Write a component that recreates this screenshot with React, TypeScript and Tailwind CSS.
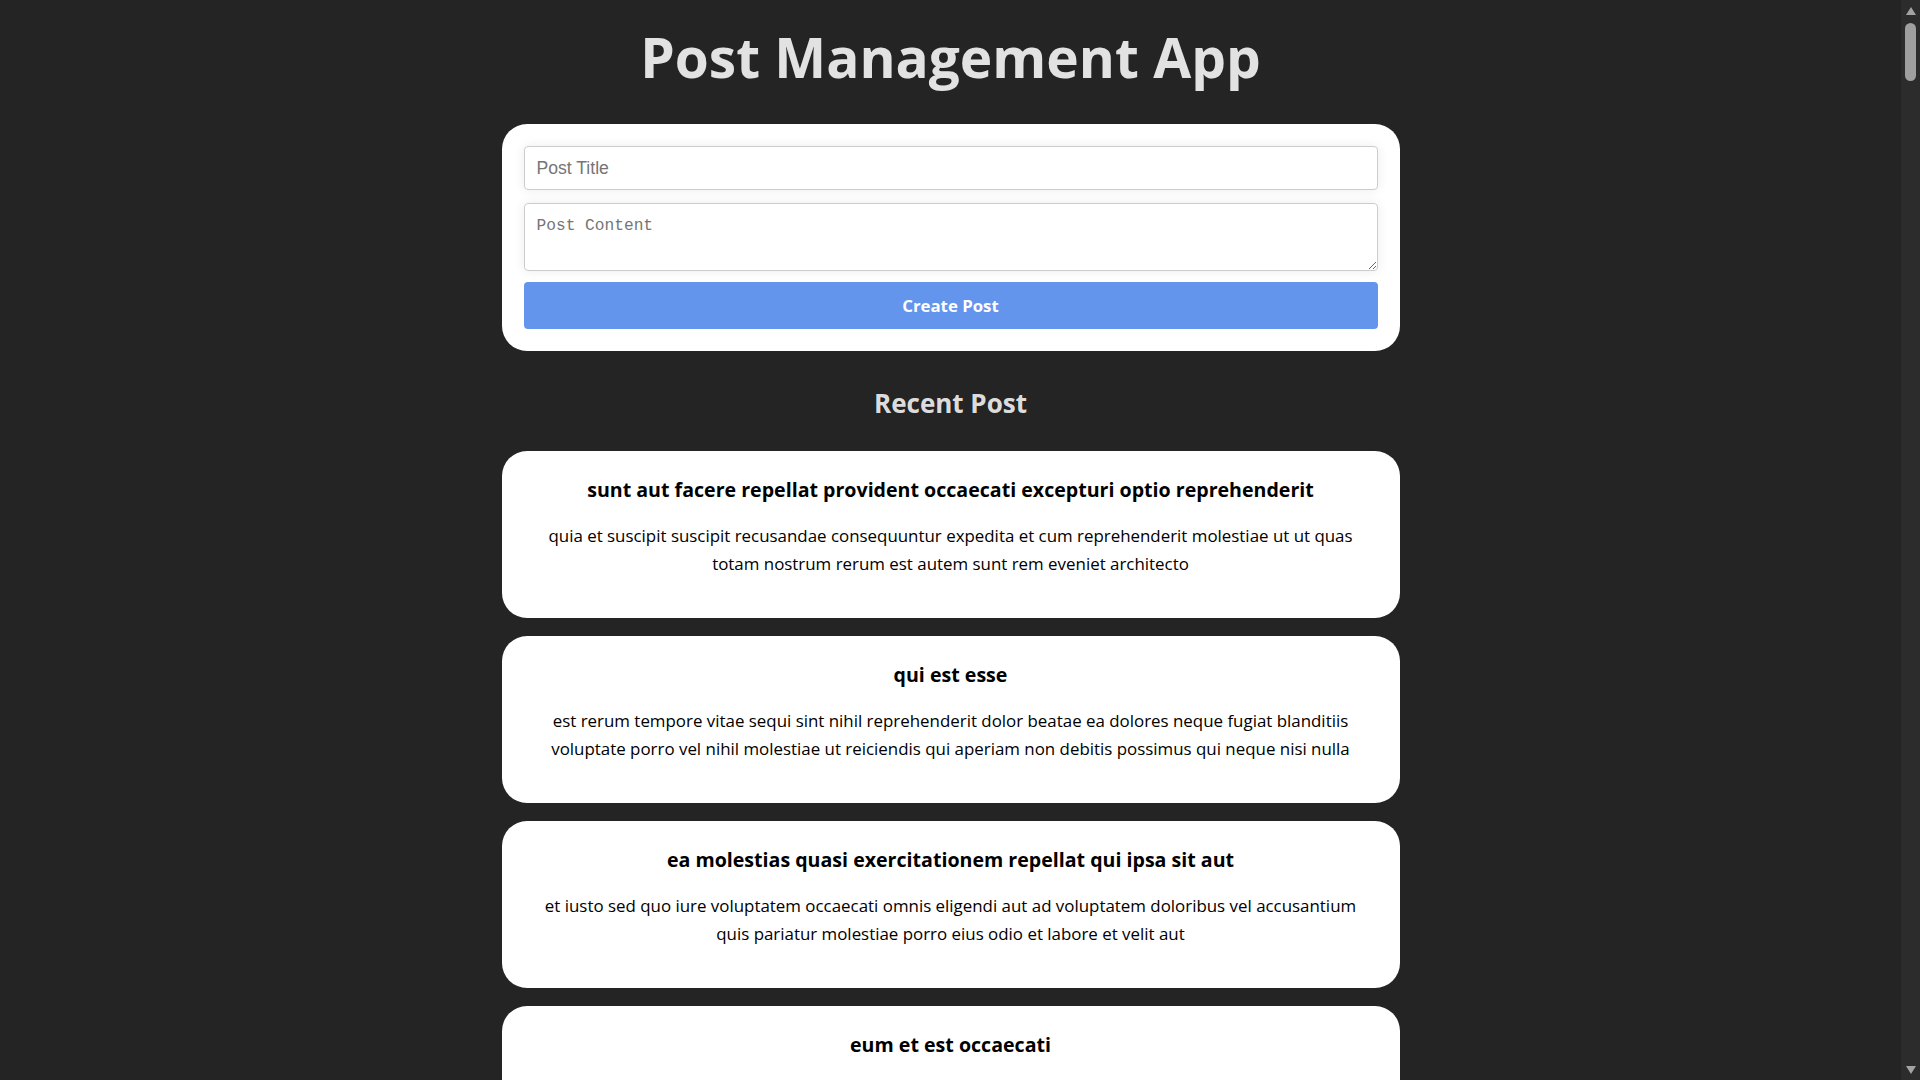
import React, { useState } from 'react';

interface Post {
  id: number;
  title: string;
  body: string;
}

const initialPosts: Post[] = [
  {
    id: 1,
    title: 'sunt aut facere repellat provident occaecati excepturi optio reprehenderit',
    body: 'quia et suscipit suscipit recusandae consequuntur expedita et cum reprehenderit molestiae ut ut quas totam nostrum rerum est autem sunt rem eveniet architecto'
  },
  {
    id: 2,
    title: 'qui est esse',
    body: 'est rerum tempore vitae sequi sint nihil reprehenderit dolor beatae ea dolores neque fugiat blanditiis voluptate porro vel nihil molestiae ut reiciendis qui aperiam non debitis possimus qui neque nisi nulla'
  },
  {
    id: 3,
    title: 'ea molestias quasi exercitationem repellat qui ipsa sit aut',
    body: 'et iusto sed quo iure voluptatem occaecati omnis eligendi aut ad voluptatem doloribus vel accusantium quis pariatur molestiae porro eius odio et labore et velit aut'
  },
  {
    id: 4,
    title: 'eum et est occaecati',
    body: 'ullam et saepe reiciendis voluptatem adipisci sit amet autem assumenda provident rerum culpa quis hic commodi nesciunt rem tenetur doloremque ipsam iure quis sunt voluptatem rerum illo velit'
  },
  {
    id: 5,
    title: 'nesciunt quas odio',
    body: 'repudiandae veniam quaerat sunt sed alias aut fugiat sit autem sed est voluptatem omnis possimus esse voluptatibus quis est aut tenetur dolor neque'
  }
];

function ScrollBar() {
  return (
    <div className="w-[19px] shrink-0 bg-[#2c2c2c] flex flex-col items-center">
      <svg width="12" height="10" viewBox="0 0 12 10" className="mt-[6px]">
        <path d="M6 1 L11 9 L1 9 Z" fill="#a3a3a3" />
      </svg>
      <div className="mt-[7px] w-[11px] h-[58px] rounded-full bg-[#9f9f9f]" />
      <div className="flex-1" />
      <svg width="12" height="10" viewBox="0 0 12 10" className="mb-[5px]">
        <path d="M1 1 L11 1 L6 9 Z" fill="#a3a3a3" />
      </svg>
    </div>
  );
}

export default function App() {
  const [posts, setPosts] = useState<Post[]>(initialPosts);
  const [title, setTitle] = useState('');
  const [body, setBody] = useState('');

  const handleSubmit = (e: React.FormEvent) => {
    e.preventDefault();
    if (!title.trim() || !body.trim()) return;
    setPosts([{ id: Date.now(), title, body }, ...posts]);
    setTitle('');
    setBody('');
  };

  return (
    <div className="h-screen flex bg-[#242424] font-['Open_Sans',sans-serif] overflow-hidden">
      <main className="flex-1 min-w-0 overflow-hidden">
        <div className="w-[898px] mx-auto pt-[29px] pb-10">

          {/* Header */}
          <h1 className="text-center text-[55px] leading-none font-bold text-white/87 mb-[40px]">
            Post Management App
          </h1>

          {/* Create form */}
          <form
            onSubmit={handleSubmit}
            className="bg-white rounded-[25px] p-[22px] flex flex-col"
          >
            <input
              type="text"
              value={title}
              onChange={(e) => setTitle(e.target.value)}
              placeholder="Post Title"
              className="h-[44px] px-3 mb-[13px] border border-[#ccc] rounded-[4px] shadow-[0_0_12px_rgba(0,0,0,0.08)] font-['Liberation_Sans',Arial,sans-serif] text-[17.6px] text-black placeholder:text-[#757575] outline-none"
            />
            <textarea
              value={body}
              onChange={(e) => setBody(e.target.value)}
              placeholder="Post Content"
              className="h-[68px] px-3 py-[10px] mb-[11px] border border-[#ccc] rounded-[4px] shadow-[0_0_12px_rgba(0,0,0,0.08)] font-['Liberation_Mono',monospace] text-[16.2px] text-black placeholder:text-[#757575] outline-none block"
            />
            <button
              type="submit"
              className="h-[47px] rounded-[4px] bg-[#6495ed] text-white text-[16.8px] font-bold"
            >
              Create Post
            </button>
          </form>

          {/* List */}
          <h2 className="text-center text-[26px] leading-none font-bold text-white/87 mt-[39px] mb-[35px]">
            Recent Post
          </h2>

          <div className="flex flex-col gap-[18px]">
            {posts.map((post) => (
              <div
                key={post.id}
                className="bg-white rounded-[25px] px-[29px] pt-[24px] pb-[40px] text-center text-black"
              >
                <h3 className="text-[19.6px] leading-[30px] font-bold">{post.title}</h3>
                <p className="mt-[17px] text-[16.9px] leading-[28px]">{post.body}</p>
              </div>
            ))}
          </div>

        </div>
      </main>
      <ScrollBar />
    </div>
  );
}
